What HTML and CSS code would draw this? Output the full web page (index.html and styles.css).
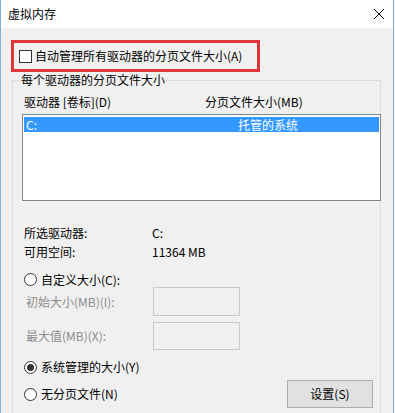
FILE: index.html
```html
<!DOCTYPE html>
<html>
<head>
<meta charset="utf-8">
<link rel="stylesheet" href="styles.css">
</head>
<body>
<div class="window">
  <div class="titlebar">
    <span class="title">虚拟内存</span>
    <svg class="close" width="12" height="12" viewBox="0 0 12 12"><path d="M1 1 L11 11 M11 1 L1 11" stroke="#000" stroke-width="1" fill="none"/></svg>
  </div>
  <div class="content">
    <div class="auto-box">
      <span class="checkbox"></span>
      <span class="auto-label">自动管理所有驱动器的分页文件大小(A)</span>
    </div>
    <div class="group">
      <span class="legend">每个驱动器的分页文件大小</span>
      <div class="headers">
        <span>驱动器 [卷标](D)</span>
        <span>分页文件大小(MB)</span>
      </div>
      <div class="listbox">
        <div class="row selected"><span>C:</span><span>托管的系统</span></div>
      </div>
      <div class="info">
        <div class="info-row"><span>所选驱动器:</span><span>C:</span></div>
        <div class="info-row"><span>可用空间:</span><span>11364 MB</span></div>
      </div>
      <div class="radio-row custom"><span class="radio"></span><span>自定义大小(C):</span></div>
      <div class="field-row first"><span class="field-label">初始大小(MB)(I):</span><span class="field"></span></div>
      <div class="field-row second"><span class="field-label">最大值(MB)(X):</span><span class="field"></span></div>
      <div class="radio-row managed"><span class="radio checked"></span><span>系统管理的大小(Y)</span></div>
      <div class="bottom-row">
        <div class="radio-row none"><span class="radio"></span><span>无分页文件(N)</span></div>
        <div class="button">设置(S)</div>
      </div>
    </div>
  </div>
</div>
</body>
</html>
```

FILE: styles.css
```css
* { box-sizing: border-box; }
html, body {
  margin: 0;
  padding: 0;
  width: 395px;
  height: 413px;
  overflow: hidden;
  background: #f0f0f0;
}
body {
  font-family: "Noto Sans CJK SC", "Noto Sans", sans-serif;
  font-size: 12px;
  color: #000;
  line-height: 16px;
}
.window {
  width: 394px;
  height: 413px;
  border-left: 1px solid #7fb0dc;
  border-right: 1px solid #7fb0dc;
  background: #f0f0f0;
}
.titlebar {
  height: 28px;
  background: #fff;
  display: flex;
  align-items: center;
  justify-content: space-between;
  padding-left: 7px;
  padding-right: 8px;
}
.title { font-size: 12px; }
.close { display: block; margin-top: 0; }
.content {
  padding-top: 12px;
}
.auto-box {
  margin-left: 10px;
  width: 249px;
  height: 32px;
  border: 3px solid #e0353a;
  display: flex;
  align-items: center;
  padding-left: 5px;
}
.checkbox {
  width: 13px;
  height: 13px;
  border: 1px solid #333;
  background: #fff;
  margin-right: 3px;
}
.group {
  position: relative;
  margin-left: 11px;
  margin-top: 8px;
  width: 369px;
  height: 340px;
  border: 1px solid #dcdcdc;
  padding-top: 13px;
}
.legend {
  position: absolute;
  top: -9px;
  left: 7px;
  padding: 0 1px;
  background: #f0f0f0;
}
.headers {
  display: grid;
  grid-template-columns: 181px 1fr;
  padding-left: 11px;
}
.listbox {
  margin-top: 4px;
  margin-left: 9px;
  width: 359px;
  height: 87px;
  background: #fff;
  border: 1px solid #828790;
  padding: 2px 1px;
}
.row {
  height: 15px;
  line-height: 15px;
  display: grid;
  grid-template-columns: 212px 1fr;
  padding-left: 2px;
}
.row.selected {
  background: #3399ff;
  color: #fff;
}
.info {
  margin-top: 24px;
  padding-left: 11px;
  display: flex;
  flex-direction: column;
  gap: 3px;
}
.info-row {
  display: grid;
  grid-template-columns: 128px 1fr;
}
.radio-row {
  display: flex;
  align-items: center;
  padding-left: 11px;
  height: 16px;
}
.radio {
  width: 13px;
  height: 13px;
  border: 1px solid #333;
  border-radius: 50%;
  background: #fff;
  margin-right: 4px;
  display: flex;
  align-items: center;
  justify-content: center;
}
.radio.checked::after {
  content: "";
  width: 7px;
  height: 7px;
  border-radius: 50%;
  background: #333;
}
.custom {
  margin-top: 12px;
  height: 15px;
}
.field-row {
  display: flex;
  align-items: center;
  padding-left: 13px;
  height: 28px;
}
.field-row.first { margin-top: 0; height: 29px; }
.field-row.second { margin-top: 6px; }
.field-label {
  width: 127px;
  color: #8c8c8c;
}
.field {
  width: 87px;
  height: 100%;
  border: 1px solid #c9c9c9;
  background: #f0f0f0;
}
.managed {
  margin-top: 9px;
}
.bottom-row {
  margin-top: 5px;
  display: flex;
  align-items: center;
  justify-content: space-between;
  padding-right: 7px;
  height: 28px;
}
.none { padding-left: 11px; }
.button {
  width: 86px;
  height: 28px;
  background: #e1e1e1;
  border: 1px solid #adadad;
  display: flex;
  align-items: center;
  justify-content: center;
}
```
